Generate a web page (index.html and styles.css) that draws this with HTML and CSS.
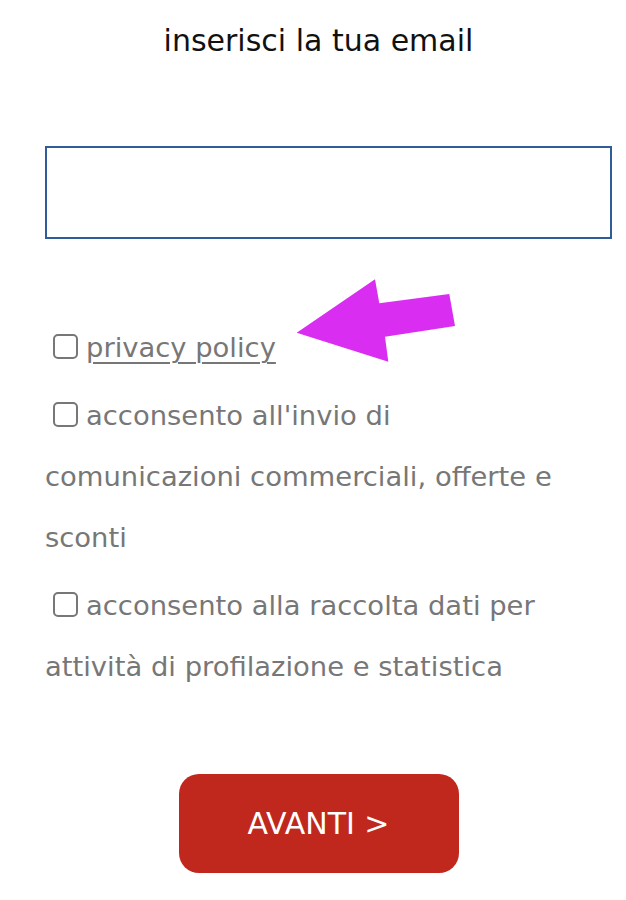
FILE: index.html
```html
<!DOCTYPE html>
<html lang="it">
<head>
<meta charset="utf-8">
<title>Email</title>
<link rel="stylesheet" href="styles.css">
</head>
<body>
<div class="page">
  <h1 class="title">inserisci la tua email</h1>
  <input class="email" type="email" aria-label="email">
  <div class="consents">
    <p class="consent"><span class="box"></span><a class="link" href="#">privacy policy</a></p>
    <p class="consent"><span class="box"></span>acconsento all'invio di comunicazioni commerciali, offerte e sconti</p>
    <p class="consent"><span class="box"></span>acconsento alla raccolta dati per attività di profilazione e statistica</p>
  </div>
  <div class="actions">
    <button class="next" type="button">AVANTI &gt;</button>
  </div>
  <svg class="arrow" viewBox="0 0 170 92" width="170" height="92" aria-hidden="true">
    <polygon points="6.7,57.7 85,4.3 89.3,28.3 159.3,19 165,51 95,61.7 98.3,86.7" fill="#d92ef2"/>
  </svg>
</div>
</body>
</html>
```

FILE: styles.css
```css
html, body {
  margin: 0;
  padding: 0;
  background: #ffffff;
}

.page {
  position: relative;
  width: 626px;
  padding: 0 14px 0 45px;
  box-sizing: border-box;
  font-family: "DejaVu Sans", "Liberation Sans", sans-serif;
}

.title {
  margin: 0;
  padding-top: 24px;
  text-align: center;
  font-size: 30px;
  font-weight: normal;
  line-height: 34px;
  color: #111111;
  transform: translateX(-10px);
}

.email {
  display: block;
  box-sizing: border-box;
  width: 567px;
  height: 93px;
  margin: 88px 0 0 0;
  border: 2px solid #2f5d99;
  border-radius: 0;
  background: #ffffff;
  outline: none;
  padding: 0 10px;
}

.consents {
  width: 530px;
  margin-top: 78px;
}

.consent {
  margin: 0 0 7px 0;
  font-size: 27.4px;
  line-height: 61px;
  color: #777777;
}

.box {
  display: inline-block;
  width: 21px;
  height: 21px;
  border: 2px solid #777777;
  border-radius: 5px;
  margin: 0 8px 0 8px;
  vertical-align: -2px;
}

.link {
  color: #777777;
  text-decoration: underline;
  text-decoration-thickness: 2px;
  text-underline-offset: 5px;
}

.actions {
  display: flex;
  justify-content: center;
  padding-right: 20px;
  margin-top: 77px;
}

.next {
  width: 280px;
  height: 99px;
  border: none;
  border-radius: 20px;
  background: #c0271d;
  color: #ffffff;
  font-family: "DejaVu Sans", "Liberation Sans", sans-serif;
  font-size: 30px;
  cursor: pointer;
}

.arrow {
  position: absolute;
  left: 290px;
  top: 275px;
}
```
